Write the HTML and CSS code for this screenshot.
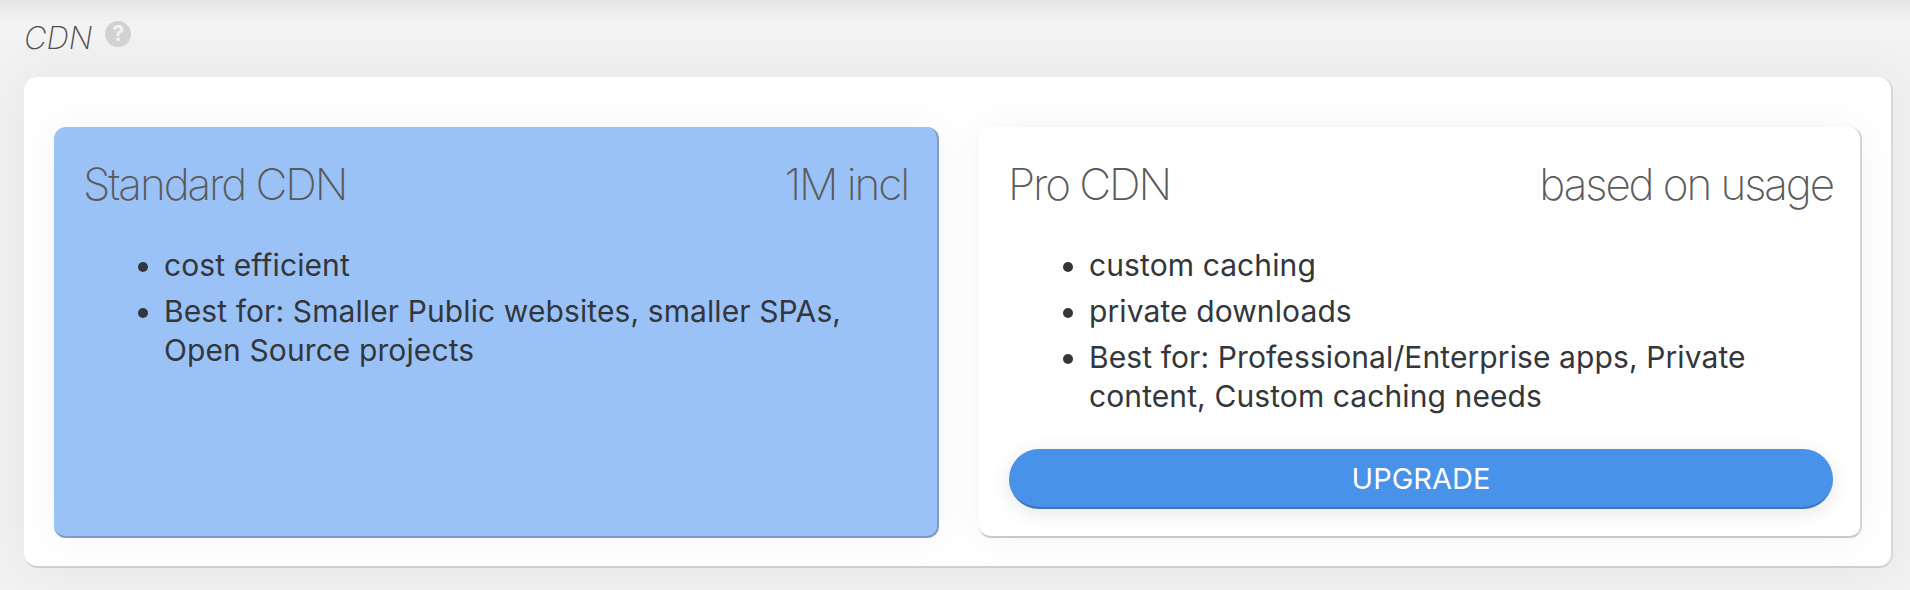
FILE: index.html
```html
<!DOCTYPE html>
<html>
<head>
    <meta charset="UTF-8">
    <title>CDN</title>
    <link rel="stylesheet" href="styles.css">
</head>
<body>
    <div class="section-title">
        <span class="title-text">CDN</span>
        <span class="help-icon">?</span>
    </div>
    <div class="panel">
        <div class="plan plan-active">
            <div class="plan-head">
                <span>Standard CDN</span>
                <span>1M incl</span>
            </div>
            <ul class="plan-list">
                <li>cost efficient</li>
                <li>Best for: Smaller Public websites, smaller SPAs, Open Source projects</li>
            </ul>
        </div>
        <div class="plan">
            <div class="plan-head">
                <span>Pro CDN</span>
                <span>based on usage</span>
            </div>
            <ul class="plan-list">
                <li>custom caching</li>
                <li>private downloads</li>
                <li>Best for: Professional/Enterprise apps, Private content, Custom caching needs</li>
            </ul>
            <button class="upgrade">UPGRADE</button>
        </div>
    </div>
</body>
</html>
```

FILE: styles.css
```css
html, body {
    height: 100%;
}
body {
    margin: 0;
    padding: 16px 17px 0 24px;
    box-sizing: border-box;
    background-color: #f1f1f1;
    background-image: linear-gradient(#e6e6e6, #f3f3f3 22px);
    background-repeat: no-repeat;
    background-size: 100% 40px;
    font-family: Inter, "Liberation Sans", sans-serif;
    color: #33363b;
    overflow: hidden;
}
.section-title {
    display: flex;
    align-items: flex-start;
    height: 61px;
}
.title-text {
    margin-top: 3px;
    font-size: 31px;
    line-height: 38px;
    font-weight: 200;
    font-style: italic;
    color: #4d4d4d;
}
.help-icon {
    width: 26px;
    height: 26px;
    margin: 5px 0 0 13px;
    border-radius: 50%;
    background-color: #d2d2d2;
    color: #f2f2f2;
    font-size: 21px;
    line-height: 26px;
    font-weight: 700;
    text-align: center;
}
.panel {
    display: grid;
    grid-template-columns: 885fr 883fr;
    gap: 40px;
    height: 491px;
    padding: 50px 29px 28px 30px;
    box-sizing: border-box;
    background-color: #fff;
    border-radius: 14px;
    border-bottom: 2px solid #cfcfcf;
    border-right: 2px solid #d8d8d8;
    box-shadow: 0 0 50px rgba(0, 0, 0, 0.05);
}
.plan {
    display: flex;
    flex-direction: column;
    padding: 32px 27px 27px 30px;
    background-color: #fff;
    border-radius: 12px;
    border-bottom: 2px solid #c9c9c9;
    border-right: 2px solid #d4d4d4;
    box-shadow: 0 0 40px rgba(0, 0, 0, 0.05);
}
.plan-active {
    padding-right: 29px;
    background-color: #9bc2f6;
    border-bottom-color: #7c9bc6;
    border-right-color: #7c9bc6;
}
.plan-head {
    display: flex;
    justify-content: space-between;
    margin-left: -1px;
    font-size: 44px;
    line-height: 50px;
    font-weight: 200;
    letter-spacing: -2.1px;
    color: #5a5a5a;
}
.plan-list {
    flex: 1;
    margin: 37px 0 0;
    padding: 0 0 0 80px;
    font-size: 30px;
    line-height: 39px;
    letter-spacing: 0.1px;
    font-weight: 400;
}
.plan-list li {
    margin-bottom: 7px;
}
.upgrade {
    height: 60px;
    border: none;
    border-radius: 30px;
    border-bottom: 2px solid #3f74b8;
    background-color: #4892ea;
    color: #fff;
    font-family: inherit;
    font-size: 29px;
    font-weight: 400;
    box-shadow: 0 4px 20px rgba(0, 0, 0, 0.1);
}
```
